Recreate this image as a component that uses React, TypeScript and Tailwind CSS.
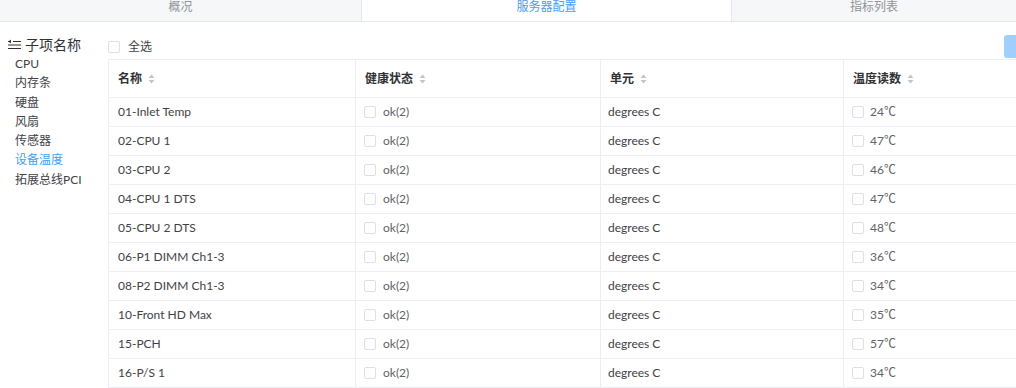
import React from 'react';

const rows = [
  { name: '01-Inlet Temp', temp: '24℃' },
  { name: '02-CPU 1', temp: '47℃' },
  { name: '03-CPU 2', temp: '46℃' },
  { name: '04-CPU 1 DTS', temp: '47℃' },
  { name: '05-CPU 2 DTS', temp: '48℃' },
  { name: '06-P1 DIMM Ch1-3', temp: '36℃' },
  { name: '08-P2 DIMM Ch1-3', temp: '34℃' },
  { name: '10-Front HD Max', temp: '35℃' },
  { name: '15-PCH', temp: '57℃' },
  { name: '16-P/S 1', temp: '34℃' },
];

const menu = ['CPU', '内存条', '硬盘', '风扇', '传感器', '设备温度', '拓展总线PCI'];

const SortIcon = () => (
  <svg width="7" height="10" viewBox="0 0 7 10" className="ml-[6px]">
    <path d="M3.5 0.5 L6.5 4 L0.5 4 Z" fill="#c0c4cc" />
    <path d="M3.5 9.5 L6.5 6 L0.5 6 Z" fill="#c0c4cc" />
  </svg>
);

const Box = () => <span className="inline-block w-[12px] h-[12px] border border-[#dcdfe6] rounded-[2px] bg-white shrink-0" />;

export default function App() {
  const cols = 'grid grid-cols-[247px_245px_243px_260px]';
  return (
    <div className="w-[1016px] h-[388px] overflow-hidden bg-white text-[#606266]" style={{ fontFamily: 'Lato, "Noto Sans CJK SC", sans-serif' }}>
      {/* tabs */}
      <div className="flex h-[22px] border-b border-[#e4e7ed] text-[12px] leading-[14px]">
        <div className="w-[362px] bg-[#f5f7f8] border-r border-[#e4e7ed] flex justify-center text-[#909399]">概况</div>
        <div className="w-[369px] bg-white flex justify-center text-[#409eff]">服务器配置</div>
        <div className="flex-1 bg-[#f5f7f8] border-l border-[#e4e7ed] flex justify-center text-[#909399]">指标列表</div>
      </div>

      <div className="flex">
        {/* sidebar */}
        <div className="w-[108px] shrink-0 pt-[14px] pl-[8px]">
          <div className="flex items-center gap-[4px] text-[14px] leading-[18px] text-[#303133]">
            <svg width="13" height="12" viewBox="0 0 13 12">
              <path d="M0 2.5 H3 M5 2.5 H13 M0 6 H13 M0 9.5 H13" stroke="#303133" strokeWidth="1.1" />
              <path d="M3 1 L1 2.5 L3 4" stroke="#303133" strokeWidth="1" fill="none" />
            </svg>
            <span>子项名称</span>
          </div>
          <div className="pl-[7px] text-[12px]">
            {menu.map((m) => (
              <div key={m} className={`h-[19.3px] leading-[19px] ${m === '设备温度' ? 'text-[#409eff]' : 'text-[#404246]'}`}>{m}</div>
            ))}
          </div>
        </div>

        {/* main */}
        <div className="flex-1 overflow-hidden">
          <div className="h-[37px] pt-[19px] relative">
            <div className="flex items-center h-[12px]">
              <Box />
              <span className="ml-[8px] text-[12px] leading-[12px] text-[#404246]">全选</span>
            </div>
            <div className="absolute right-[-10px] top-[13px] w-[22px] h-[23px] rounded-[3px] bg-[#a0cfff]" />
          </div>
          <div className="w-[1000px] border-t border-l border-[#ebeef5] text-[12px]">
            <div className={`${cols} h-[38px] border-b border-[#ebeef5] font-semibold text-[#303133]`}>
              {['名称', '健康状态', '单元', '温度读数'].map((h) => (
                <div key={h} className="flex items-center pl-[9px] border-r border-[#ebeef5]">
                  {h}
                  <SortIcon />
                </div>
              ))}
            </div>
            {rows.map((r) => (
              <div key={r.name} className={`${cols} h-[29px] border-b border-[#ebeef5]`}>
                <div className="flex items-center pl-[9px] border-r border-[#ebeef5] text-[#404246]">{r.name}</div>
                <div className="flex items-center pl-[8px] border-r border-[#ebeef5]">
                  <Box />
                  <span className="ml-[7px]">ok(2)</span>
                </div>
                <div className="flex items-center pl-[7px] border-r border-[#ebeef5] text-[#404246]">degrees C</div>
                <div className="flex items-center pl-[8px] border-r border-[#ebeef5]">
                  <Box />
                  <span className="ml-[6px]">{r.temp}</span>
                </div>
              </div>
            ))}
          </div>
        </div>
      </div>
    </div>
  );
}
